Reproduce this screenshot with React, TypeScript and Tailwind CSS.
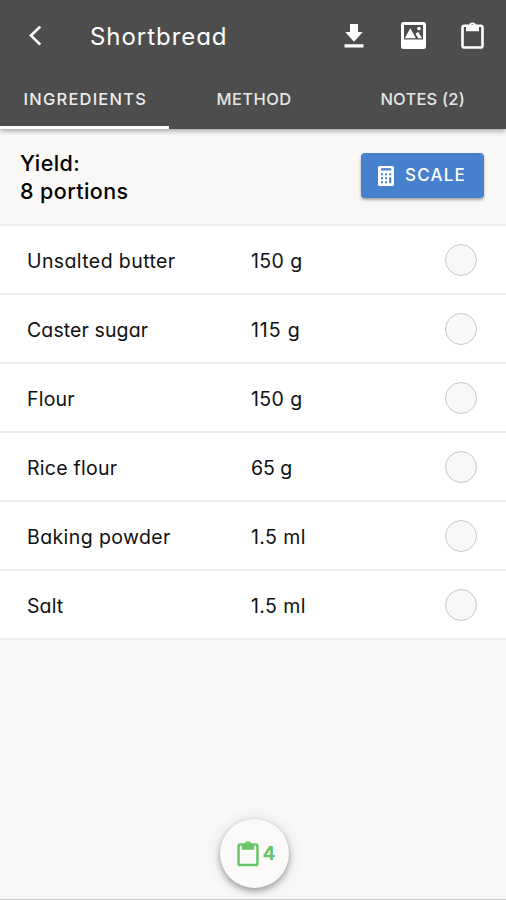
import { useState } from "react";

type IconProps = { className?: string };

const ingredients = [
  {
    name: "Unsalted butter",
    amount: "150 g",
    tracking: "tracking-[0.4px]",
    amountTracking: "tracking-[0.4px]",
  },
  {
    name: "Caster sugar",
    amount: "115 g",
    tracking: "tracking-[0.1px]",
    amountTracking: "tracking-[0.9px]",
  },
  {
    name: "Flour",
    amount: "150 g",
    tracking: "tracking-[0.2px]",
    amountTracking: "tracking-[0.4px]",
  },
  {
    name: "Rice flour",
    amount: "65 g",
    tracking: "tracking-[0.25px]",
    amountTracking: "tracking-[-0.1px]",
  },
  {
    name: "Baking powder",
    amount: "1.5 ml",
    tracking: "tracking-[0.4px]",
    amountTracking: "tracking-[0.4px]",
  },
  {
    name: "Salt",
    amount: "1.5 ml",
    tracking: "tracking-[0.1px]",
    amountTracking: "tracking-[0.4px]",
  },
];

const tabs = [
  { label: "INGREDIENTS", tracking: "tracking-[1.2px]" },
  { label: "METHOD", tracking: "tracking-[0.4px]" },
  { label: "NOTES (2)", tracking: "tracking-[0.2px]" },
];

const BackIcon = () => (
  <svg
    className="h-5 w-3.5"
    viewBox="0 0 14 20"
    fill="none"
    stroke="currentColor"
    strokeWidth="2.7"
  >
    <path d="M12.3 .6 3 9.6l9.3 9" />
  </svg>
);

const DownloadIcon = () => (
  <svg className="h-6 w-5" viewBox="0 0 20 24" fill="currentColor">
    <path d="M6 0h8v8h4.8L10 17.7 1.2 8H6zM.5 20.2h19v3.2H.5z" />
  </svg>
);

const PhotoIcon = () => (
  <svg className="h-[27px] w-[25px]" viewBox="0 0 25 27" fill="currentColor">
    <path
      fillRule="evenodd"
      d="M2.5 0h20A2.5 2.5 0 0 1 25 2.5v22a2.5 2.5 0 0 1-2.5 2.5h-20A2.5 2.5 0 0 1 0 24.5v-22A2.5 2.5 0 0 1 2.5 0zM3 3v14.5h19V3z"
    />
    <path d="M3.8 16.2 9.3 6.3l5.6 9.9zM17.3 16.2l-2.7-4.1 2.5-2.3 4 6.4z" />
    <circle cx="18" cy="6.6" r="1.8" />
  </svg>
);

const ClipboardIcon = ({ className }: IconProps) => (
  <svg className={className} viewBox="0 0 23 28">
    <rect
      x="1.5"
      y="4.8"
      width="20"
      height="21.7"
      rx="1.8"
      fill="none"
      stroke="currentColor"
      strokeWidth="2.6"
    />
    <path
      fillRule="evenodd"
      fill="currentColor"
      d="M5 4.5h2.7a3.9 4 0 0 1 7.6 0H18v5.7H5zM11.5 3a1.4 1.4 0 1 0 0 2.8 1.4 1.4 0 0 0 0-2.8z"
    />
  </svg>
);

const CalculatorIcon = () => (
  <svg className="h-5 w-4" viewBox="0 0 16 20">
    <rect width="16" height="20" rx="1.6" fill="currentColor" />
    <g fill="#4780cd">
      <path d="M3 2.2h10.2v2.3H3z" />
      <path d="M3 7.2h2v2H3zM7 7.2h2v2H7zM11.2 7.2h2v2h-2zM3 11.2h2v2H3zM7 11.2h2v2H7zM3 15.2h2v2H3zM7 15.2h2v2H7zM11.2 11.2h2v6h-2z" />
    </g>
  </svg>
);

const Header = ({
  active,
  onChange,
}: {
  active: number;
  onChange: (index: number) => void;
}) => {
  return (
    <header className="relative h-[129px] shrink-0 bg-[#4d4d4d] text-white shadow-[0_2px_5px_rgba(0,0,0,0.35)]">
      <div className="flex h-[71px] items-center pr-[22px] pl-7">
        <button aria-label="Back">
          <BackIcon />
        </button>
        <h1 className="ml-12 pt-[3px] text-[24px] tracking-[0.95px]">
          Shortbread
        </h1>
        <div className="ml-auto flex items-center">
          <button aria-label="Download">
            <DownloadIcon />
          </button>
          <button aria-label="Photo" className="ml-[37px]">
            <PhotoIcon />
          </button>
          <button aria-label="Copy" className="ml-[35px]">
            <ClipboardIcon className="mb-0.5 h-7 w-[23px]" />
          </button>
        </div>
      </div>
      <nav className="grid h-[58px] grid-cols-3">
        {tabs.map((tab, index) => (
          <button
            key={tab.label}
            onClick={() => onChange(index)}
            className={`border-b-[3px] pt-px pl-0.5 text-[16.5px] font-medium ${tab.tracking} ${
              active === index
                ? "border-white text-[#ededed]"
                : "border-transparent text-[#e6e6e6]"
            }`}
          >
            {tab.label}
          </button>
        ))}
      </nav>
    </header>
  );
};

const App = () => {
  const [active, setActive] = useState(0);
  const [checked, setChecked] = useState<string[]>([]);

  const toggle = (name: string) =>
    setChecked((prev) =>
      prev.includes(name) ? prev.filter((n) => n !== name) : [...prev, name]
    );

  return (
    <div className="flex h-[900px] w-[506px] flex-col overflow-hidden border-b border-[#c9c8c7] bg-[#faf8f7] font-['Inter',sans-serif] text-[#111] [font-feature-settings:'cv11']">
      <Header active={active} onChange={setActive} />

      <section className="flex h-[95px] shrink-0 items-start justify-between pr-[22px] pl-5">
        <p className="mt-5 text-[21.5px] leading-7 font-medium tracking-[0.4px] text-black">
          Yield:
          <br />8 portions
        </p>
        <button className="mt-6 flex h-[45px] w-[123px] items-center rounded-[4px] bg-[#4780cd] pl-[17px] text-white shadow-[0_2px_3px_rgba(0,0,0,0.35)]">
          <CalculatorIcon />
          <span className="ml-[11px] pt-px text-[17px] font-medium tracking-[1.2px]">
            SCALE
          </span>
        </button>
      </section>

      <ul className="shrink-0 border-t-2 border-[#ededed] bg-white">
        {ingredients.map((item) => (
          <li
            key={item.name}
            className="flex h-[69px] items-center border-b-2 border-[#ededed] pr-[29px] pl-[27px] text-[19.5px]"
          >
            <span className={`w-[224px] pt-1 ${item.tracking}`}>
              {item.name}
            </span>
            <span className={`pt-1 ${item.amountTracking}`}>
              {item.amount}
            </span>
            <button
              aria-label={item.name}
              onClick={() => toggle(item.name)}
              className={`mt-px ml-auto size-8 rounded-full border-[1.5px] border-[#c9c8c7] ${
                checked.includes(item.name) ? "bg-[#68c466]" : "bg-[#faf8f7]"
              }`}
            />
          </li>
        ))}
      </ul>

      <button className="mt-auto mr-auto mb-[11px] ml-[219.5px] flex size-[69px] shrink-0 items-center rounded-full bg-[#fbfaf9] pl-[17px] text-[#68c466] shadow-[0_3px_6px_rgba(0,0,0,0.35),0_1px_18px_rgba(0,0,0,0.1)]">
        <ClipboardIcon className="h-[26.5px] w-[22px]" />
        <span className="ml-1 pt-0.5 text-[19px] font-bold">4</span>
      </button>
    </div>
  );
};

export default App;
